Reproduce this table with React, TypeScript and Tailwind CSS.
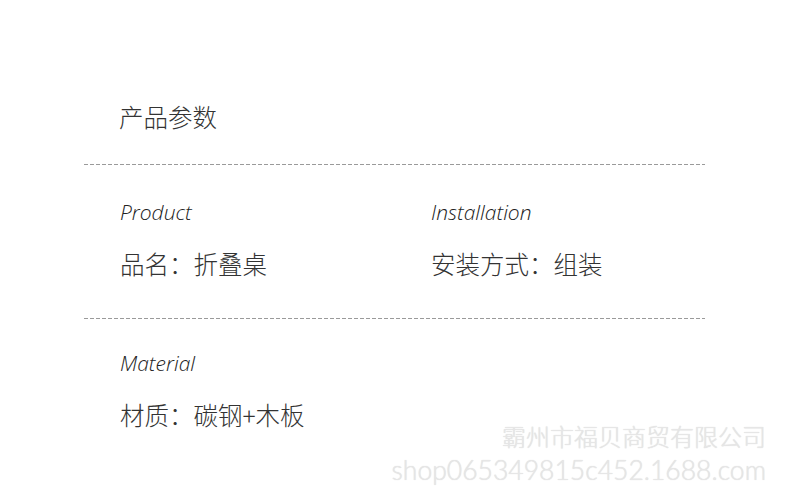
const cjk = "font-['Noto_Sans_CJK_SC',sans-serif]"

function Dashed() {
  return <div className="ml-[84px] w-[621px] h-px bg-[repeating-linear-gradient(to_right,#9a9a9a_0,#9a9a9a_4px,transparent_4px,transparent_6px)]" />
}

function Cell({ en, zh }: { en: string; zh: string }) {
  return (
    <div className="w-[311px]">
      <div className="font-['Open_Sans',sans-serif] italic font-light text-[21px] leading-none text-[#222]">{en}</div>
      <div className={`${cjk} font-light mt-[29px] text-[24.5px] leading-none text-[#333]`}>{zh}</div>
    </div>
  )
}

export default function App() {
  return (
    <div className="relative w-[790px] h-[503px] bg-white overflow-hidden">
      <div className="pt-[105px]">
        <div className={`${cjk} font-light pl-[119px] text-[24.5px] leading-none text-[#333]`}>产品参数</div>
        <div className="mt-[34px]"><Dashed /></div>
        <div className="flex pl-[120px] pt-[37px] pb-[42px]">
          <Cell en="Product" zh="品名：折叠桌" />
          <Cell en="Installation" zh="安装方式：组装" />
        </div>
        <Dashed />
        <div className="flex pl-[120px] pt-[34px]">
          <Cell en="Material" zh="材质：碳钢+木板" />
        </div>
      </div>
      <div className="absolute right-[24px] top-[424px] flex flex-col items-end text-[#e6e6e6] [text-shadow:0_0_1px_#d8d8d8]">
        <div className={`${cjk} font-light text-[24px] leading-none`}>霸州市福贝商贸有限公司</div>
        <div className="font-['Lato',sans-serif] font-light text-[26.5px] leading-none mt-[9px]">shop065349815c452.1688.com</div>
      </div>
    </div>
  )
}
